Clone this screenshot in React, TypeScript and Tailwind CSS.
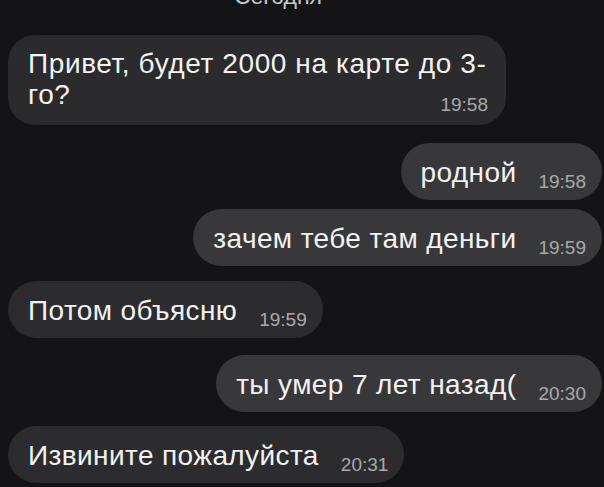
type Msg = {
  id: number;
  text: string;
  time: string;
  out: boolean;
  mt: string;
};

const messages: Msg[] = [
  { id: 2, text: "родной", time: "19:58", out: true, mt: "mt-[18px]" },
  { id: 3, text: "зачем тебе там деньги", time: "19:59", out: true, mt: "mt-[9px]" },
  { id: 4, text: "Потом объясню", time: "19:59", out: false, mt: "mt-[15px]" },
  { id: 5, text: "ты умер 7 лет назад(", time: "20:30", out: true, mt: "mt-[17px]" },
  { id: 6, text: "Извините пожалуйста", time: "20:31", out: false, mt: "mt-[14px]" },
];

function Bubble({ msg }: { msg: Msg }) {
  return (
    <div
      className={`${msg.mt} ${msg.out ? "self-end bg-[#38383b]" : "self-start bg-[#2c2c2f]"} flex items-end h-[57px] rounded-full pl-[20px] pr-[16px] pt-[14px] pb-[11px]`}
    >
      <span className="text-[28px] leading-[32px] tracking-[0.4px] text-[#f2f2f2]">{msg.text}</span>
      <span className="ml-[22px] mb-[-3px] text-[19px] leading-[20px] text-[#a9a9ab]">{msg.time}</span>
    </div>
  );
}

export default function App() {
  return (
    <div
      className="w-[604px] h-[487px] overflow-hidden bg-[#141416] flex flex-col pl-[8px] pr-[2px]"
      style={{ fontFamily: '"Liberation Sans", Arial, sans-serif' }}
    >
      {/* дата */}
      <div className="h-[8px] relative flex justify-center pr-[54px]">
        <span className="absolute bottom-[0px] text-[23px] leading-[24px] text-[#c8c8ca]">Сегодня</span>
      </div>

      {/* первое сообщение, две строки */}
      <div className="mt-[27px] self-start w-[498px] h-[90px] rounded-[27px] bg-[#2b2b2e] pl-[20px] pr-[18px] pt-[13px] relative">
        <p className="text-[28px] leading-[31px] tracking-[0.6px] text-[#f2f2f2]">
          Привет, будет 2000 на карте до 3-
          <br />
          го?
        </p>
        <span className="absolute right-[18px] bottom-[10px] text-[19px] leading-[20px] text-[#a9a9ab]">19:58</span>
      </div>

      {messages.map((m) => (
        <Bubble key={m.id} msg={m} />
      ))}
    </div>
  );
}
